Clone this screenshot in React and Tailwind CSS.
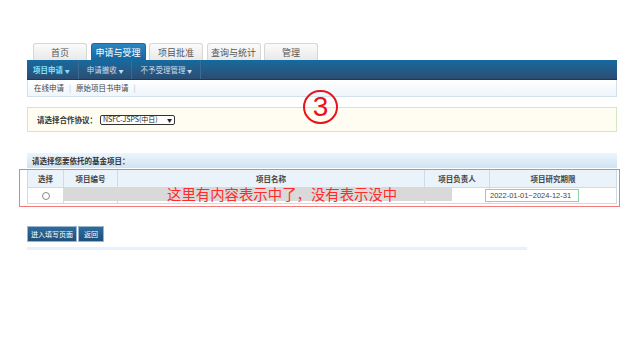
import React from "react";

const tabs = ["首页", "申请与受理", "项目批准", "查询与统计", "管理"];
const navItems = [
    { label: "项目申请", active: true },
    { label: "申请撤收", active: false },
    { label: "不予受理管理", active: false },
];

export default function App() {
    return (
        <div className="relative w-[637px] h-[340px] bg-white overflow-hidden font-['Noto_Sans_CJK_SC','Noto_Sans',sans-serif] text-[#333]">
            <div className="pt-[43px] pl-[27px] w-[617px]">

                {/* top tabs */}
                <div className="flex pl-[6px] gap-[3.5px] h-[17px]">
                    {tabs.map((t, i) => (
                        <div
                            key={t}
                            className={
                                i === 1
                                    ? "w-[55px] flex items-center justify-center rounded-t-[3px] text-[9px] leading-none text-white bg-gradient-to-b from-[#2b86c2] to-[#1565a0] border border-[#1d6aa2] border-b-0"
                                    : "w-[54px] flex items-center justify-center rounded-t-[3px] text-[9px] leading-none text-[#555] bg-gradient-to-b from-[#fbfbfb] to-[#e9e9e9] border border-[#d6d6d6] border-b-0"
                            }
                        >
                            {t}
                        </div>
                    ))}
                </div>

                {/* blue nav bar */}
                <div className="h-[20px] flex items-center bg-gradient-to-b from-[#136b9f] to-[#2a4d72] border-b border-[#1d3a57]">
                    {navItems.map((n) => (
                        <div key={n.label} className="flex items-center h-full">
                            <span className={`px-[6px] text-[7.5px] leading-none ${n.active ? "text-[#7fe3ff] font-bold" : "text-[#c9dced] font-normal"}`}>
                                {n.label} <span className="text-[5px]">▼</span>
                            </span>
                            <div className="ml-[2px] mr-[2px] w-px h-full bg-[#1c4264] border-r border-[#3a6b94]" />
                        </div>
                    ))}
                </div>

                {/* sub menu */}
                <div className="h-[17px] flex items-center pl-[6px] bg-gradient-to-b from-white to-[#eef5fb] border-x border-b border-[#d5e1ea] text-[7.5px] leading-none text-[#444]">
                    <span>在线申请</span>
                    <span className="mx-[5px] text-[#bbb]">|</span>
                    <span>原始项目书申请</span>
                    <span className="mx-[5px] text-[#bbb]">|</span>
                </div>

                {/* agreement select */}
                <div className="mt-[10px] h-[25px] flex items-center pl-[9px] bg-[#fffdf1] border-[1.5px] border-[#d2e9c4]">
                    <span className="text-[7.5px] font-bold text-[#333] leading-none">请选择合作协议：</span>
                    <div className="ml-[3px] h-[10px] w-[75px] flex items-center justify-between px-[2px] border border-[#333] rounded-[2px] bg-white text-[7px] leading-none text-[#222]">
                        <span>NSFC-JSPS(中日)</span>
                        <span className="text-[5px]">▼</span>
                    </div>
                </div>

                {/* section header */}
                <div className="mt-[21px] h-[15px] flex items-center pl-[5px] bg-gradient-to-b from-[#eef5fb] to-[#cfe3f1] text-[7.5px] font-bold leading-none text-[#333]">
                    请选择您要依托的基金项目：
                </div>

                {/* table */}
                <div className="mt-px border border-[#cddbe8]">
                    <div className="flex h-[17px] bg-[#eaf2fa] text-[7.5px] font-bold leading-none text-[#444]">
                        <div className="w-[36px] flex items-center justify-center border-r border-[#cddbe8]">选择</div>
                        <div className="w-[54px] flex items-center justify-center border-r border-[#cddbe8]">项目编号</div>
                        <div className="w-[307px] flex items-center justify-center border-r border-[#cddbe8]">项目名称</div>
                        <div className="w-[65px] flex items-center justify-center border-r border-[#cddbe8]">项目负责人</div>
                        <div className="flex-1 flex items-center justify-center">项目研究期限</div>
                    </div>
                    <div className="flex h-[16px] border-t border-[#cddbe8] bg-white">
                        <div className="w-[36px] flex items-center justify-center border-r border-[#cddbe8]">
                            <div className="w-[8px] h-[8px] rounded-full border border-[#888] bg-white" />
                        </div>
                        <div className="w-[54px] border-r border-[#cddbe8]" />
                        <div className="w-[307px] border-r border-[#cddbe8]" />
                        <div className="w-[65px] border-r border-[#cddbe8]" />
                        <div className="flex-1" />
                    </div>
                </div>

                {/* buttons */}
                <div className="mt-[22px] flex gap-px">
                    <button className="h-[16px] w-[50px] flex items-center justify-center bg-gradient-to-b from-[#2f6c9c] to-[#1d4f7c] border border-[#9ab5cc] text-white text-[7px] leading-none">进入填写页面</button>
                    <button className="h-[16px] w-[26px] flex items-center justify-center bg-gradient-to-b from-[#2f6c9c] to-[#1d4f7c] border border-[#9ab5cc] text-white text-[7px] leading-none">返回</button>
                </div>
                <div className="mt-[5px] h-[3px] w-[500px] bg-[#e8f1f9]" />
            </div>

            {/* annotations */}
            <div className="absolute left-[303px] top-[90px] w-[35px] h-[34px] rounded-full border-2 border-[#e8141c] flex items-center justify-center">
                <span className="font-['Liberation_Sans',sans-serif] text-[28px] leading-none text-[#e8141c]">3</span>
            </div>

            <div className="absolute left-[63px] top-[188px] w-[389px] h-[13px] bg-[#d9d9d9]" />
            <div className="absolute left-[167px] top-[185px] text-[14.4px] leading-[18px] text-[#ff2a2a] whitespace-nowrap">
                这里有内容表示中了，没有表示没中
            </div>

            <div className="absolute left-[485px] top-[189px] w-[94px] h-[13px] border-[1.5px] border-[#8fd3a8] bg-white flex items-center pl-[4px] whitespace-nowrap font-['Liberation_Sans',sans-serif] text-[7.5px] leading-none text-[#444]">
                2022-01-01~2024-12-31
            </div>

            <div className="absolute left-[19px] top-[169px] w-[601px] h-[38px] border-[1.5px] border-[#f47a7a]" />
        </div>
    );
}
